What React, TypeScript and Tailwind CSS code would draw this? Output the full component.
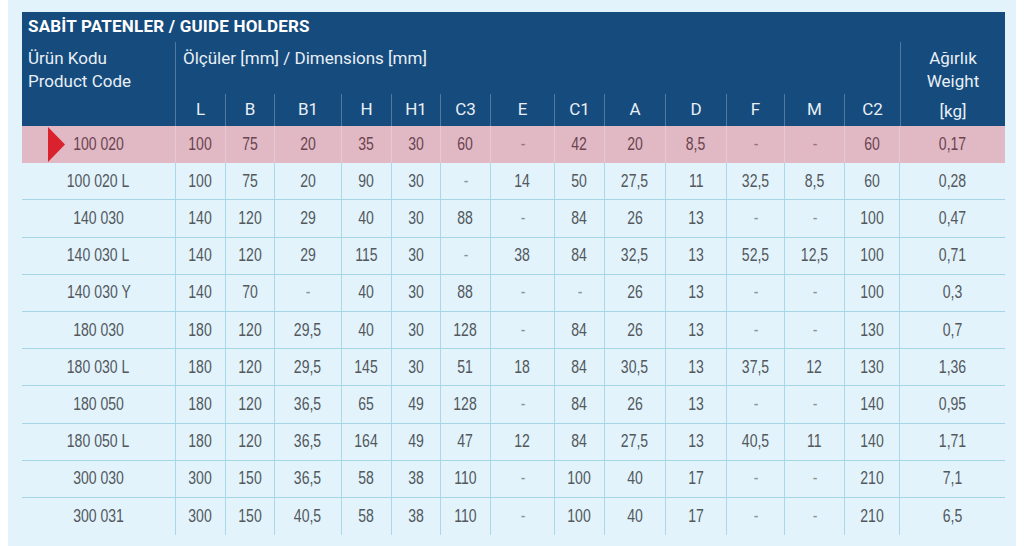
import React from "react";

const cols =
  "grid grid-cols-[154px_50px_49px_67px_50px_49px_50px_64px_50px_61px_61px_58px_60px_55px_105px]";

const letters = ["L", "B", "B1", "H", "H1", "C3", "E", "C1", "A", "D", "F", "M", "C2"];

const rows: string[][] = [
  ["100 020", "100", "75", "20", "35", "30", "60", "-", "42", "20", "8,5", "-", "-", "60", "0,17"],
  ["100 020 L", "100", "75", "20", "90", "30", "-", "14", "50", "27,5", "11", "32,5", "8,5", "60", "0,28"],
  ["140 030", "140", "120", "29", "40", "30", "88", "-", "84", "26", "13", "-", "-", "100", "0,47"],
  ["140 030 L", "140", "120", "29", "115", "30", "-", "38", "84", "32,5", "13", "52,5", "12,5", "100", "0,71"],
  ["140 030 Y", "140", "70", "-", "40", "30", "88", "-", "-", "26", "13", "-", "-", "100", "0,3"],
  ["180 030", "180", "120", "29,5", "40", "30", "128", "-", "84", "26", "13", "-", "-", "130", "0,7"],
  ["180 030 L", "180", "120", "29,5", "145", "30", "51", "18", "84", "30,5", "13", "37,5", "12", "130", "1,36"],
  ["180 050", "180", "120", "36,5", "65", "49", "128", "-", "84", "26", "13", "-", "-", "140", "0,95"],
  ["180 050 L", "180", "120", "36,5", "164", "49", "47", "12", "84", "27,5", "13", "40,5", "11", "140", "1,71"],
  ["300 030", "300", "150", "36,5", "58", "38", "110", "-", "100", "40", "17", "-", "-", "210", "7,1"],
  ["300 031", "300", "150", "40,5", "58", "38", "110", "-", "100", "40", "17", "-", "-", "210", "6,5"],
];

export default function App() {
  return (
    <div className="w-[1024px] h-[546px] bg-white overflow-hidden">
      <div className="ml-[8px] w-[1008px] h-full bg-[#e2f3fc] pt-[12px] pl-[14px]">
        <div className="w-[983px]">
          {/* Header */}
          <div
            className={`${cols} bg-[#154b7d] text-[#e9eff5] font-['Roboto',sans-serif] text-[17px]`}
          >
            <div className="col-span-15 h-[30px] pl-[6px] flex items-center text-white font-bold text-[17px] tracking-[0.2px]">
              SABİT PATENLER / GUIDE HOLDERS
            </div>
            <div className="row-span-2 border-r border-[#52799f] pl-[6px] pt-[5px] leading-[23px]">
              <div>Ürün Kodu</div>
              <div>Product Code</div>
            </div>
            <div className="col-span-13 h-[52px] pl-[7px] pt-[5px] leading-[23px]">
              Ölçüler [mm] / Dimensions [mm]
            </div>
            <div className="row-start-2 col-start-15 row-span-2 border-l border-[#52799f] flex flex-col items-center pt-[5px] leading-[23px]">
              <div>Ağırlık</div>
              <div>Weight</div>
              <div className="mt-[7px]">[kg]</div>
            </div>
            {letters.map((l, i) => (
              <div
                key={l}
                className={`h-[32px] flex items-center justify-center ${
                  i < letters.length - 1 ? "border-r border-[#52799f]" : ""
                }`}
              >
                {l}
              </div>
            ))}
          </div>

          {/* Body */}
          <div className="font-['Liberation_Sans',Arial,sans-serif] text-[18px]">
            {rows.map((r, ri) => {
              const hl = ri === 0;
              return (
                <div
                  key={r[0]}
                  className={`${cols} h-[37.2px] ${hl ? "bg-[#e0b9c5] text-[#6b4450]" : "text-[#53585c]"} ${
                    ri < rows.length - 1 && !hl ? "border-b border-[#a5d6e6]" : ""
                  }`}
                >
                  {r.map((c, ci) => (
                    <div
                      key={ci}
                      className={`relative flex items-center justify-center ${
                        ci < r.length - 1 ? (hl ? "border-r border-[#e6cad3]" : "border-r border-[#a9d9e8]") : ""
                      } ${c === "-" ? (hl ? "text-[#9c6f7c]" : "text-[#8a9499]") : ""}`}
                    >
                      {hl && ci === 0 && (
                        <svg
                          className="absolute left-[26px] top-[1px]"
                          width="17"
                          height="35"
                          viewBox="0 0 17 35"
                        >
                          <polygon points="0,0 17,17.5 0,35" fill="#d9222e" />
                        </svg>
                      )}
                      <span className="inline-block whitespace-nowrap scale-x-[0.78]">{c}</span>
                    </div>
                  ))}
                </div>
              );
            })}
          </div>
        </div>
      </div>
    </div>
  );
}
